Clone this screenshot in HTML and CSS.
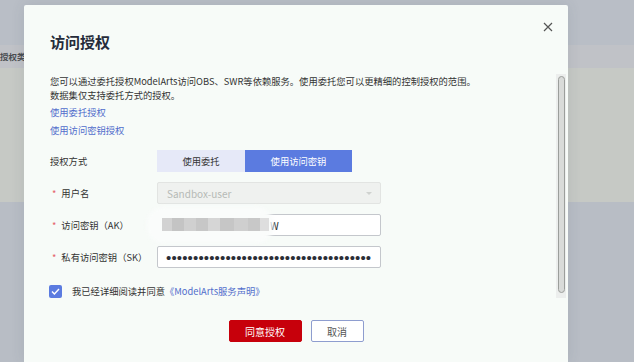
FILE: index.html
```html
<!DOCTYPE html>
<html lang="zh-CN">
<head>
    <meta charset="UTF-8">
    <meta name="viewport" content="width=device-width, initial-scale=1.0">
    <title>访问授权</title>
    <link rel="stylesheet" href="styles.css">
</head>
<body>
    <div class="page">
        <div class="page-top"></div>
        <div class="page-thead"><span>授权类型</span></div>
        <div class="page-tbody"></div>
        <div class="page-rest"></div>
    </div>

    <div class="dialog">
        <button class="close" aria-label="关闭">
            <svg width="10" height="10" viewBox="0 0 10 10"><path d="M1 1L9 9M9 1L1 9" stroke="#555" stroke-width="1.2" fill="none"/></svg>
        </button>
        <h2 class="title">访问授权</h2>

        <div class="dialog-body">
            <div class="content">
                <p class="desc">您可以通过委托授权ModelArts访问OBS、SWR等依赖服务。使用委托您可以更精细的控制授权的范围。<br>数据集仅支持委托方式的授权。</p>
                <div class="links">
                    <a href="#">使用委托授权</a>
                    <a href="#">使用访问密钥授权</a>
                </div>

                <div class="form">
                    <div class="row">
                        <div class="label">授权方式</div>
                        <div class="seg">
                            <span class="seg-item">使用委托</span>
                            <span class="seg-item active">使用访问密钥</span>
                        </div>
                    </div>
                    <div class="row">
                        <div class="label"><i class="req">*</i>用户名</div>
                        <div class="field disabled">
                            <span>Sandbox-user</span>
                            <span class="caret"></span>
                        </div>
                    </div>
                    <div class="row">
                        <div class="label"><i class="req">*</i>访问密钥（AK）</div>
                        <div class="field">
                            <span class="ak-tail">W</span>
                            <div class="mask"></div>
                            <div class="mask-blocks"></div>
                        </div>
                    </div>
                    <div class="row">
                        <div class="label"><i class="req">*</i>私有访问密钥（SK）</div>
                        <div class="field dots">••••••••••••••••••••••••••••••••••••••</div>
                    </div>
                </div>

                <label class="agree">
                    <span class="check">
                        <svg width="9" height="7" viewBox="0 0 9 7"><path d="M1 3.5L3.4 6L8 1" stroke="#fff" stroke-width="1.4" fill="none"/></svg>
                    </span>
                    我已经详细阅读并同意<a href="#">《ModelArts服务声明》</a>
                </label>
            </div>

            <div class="scrollbar"><div class="thumb"></div></div>
        </div>

        <div class="footer">
            <button class="btn btn-primary">同意授权</button>
            <button class="btn btn-ghost">取消</button>
        </div>
    </div>
</body>
</html>
```

FILE: styles.css
```css
html, body {
    margin: 0;
    height: 100%;
    overflow: hidden;
}
body {
    font-family: "Noto Sans CJK SC", "Noto Sans", sans-serif;
    font-size: 9.3px;
    color: #333;
    background: #b8bdc5;
}

/* page behind the modal */
.page {
    display: flex;
    flex-direction: column;
    height: 100%;
}
.page-top { height: 45px; background: #b9bec6; }
.page-thead {
    height: 23px;
    background: #c0c2c7;
    line-height: 23px;
    font-weight: bold;
    color: #4a4d52;
    font-size: 8.5px;
}
.page-tbody { height: 134px; background: #c6c9c5; }
.page-rest { flex: 1; background: #b8bdc5; }

/* modal */
.dialog {
    position: absolute;
    left: 24px;
    top: 5px;
    bottom: 0;
    width: 544px;
    background: #f7fbf8;
    border-radius: 2px 2px 0 0;
    box-shadow: 0 0 14px rgba(60, 70, 90, 0.12);
    padding-top: 27px;
    box-sizing: border-box;
}
.close {
    position: absolute;
    top: 17px;
    right: 15px;
    border: none;
    background: none;
    padding: 0;
    width: 10px;
    height: 10px;
    cursor: pointer;
}
.close svg { display: block; }
.title {
    margin: 0 0 0 26px;
    font-size: 15px;
    line-height: 20px;
    font-weight: bold;
    color: #252b3a;
}

.dialog-body {
    display: flex;
    margin-top: 22px;
    height: 224px;
    padding-left: 26px;
}
.content { flex: 1; }
.desc {
    margin: 0;
    line-height: 14px;
}
.links {
    display: flex;
    flex-direction: column;
    align-items: flex-start;
    margin-top: 1px;
}
.links a, .agree a {
    color: #526ecc;
    text-decoration: none;
    line-height: 18px;
}

.form {
    display: flex;
    flex-direction: column;
    gap: 10px;
    margin-top: 11px;
}
.row {
    display: flex;
    align-items: center;
    height: 22px;
}
.label {
    width: 107px;
    flex: none;
}
.req {
    font-style: normal;
    color: #e5646e;
    margin: 0 5px 0 2px;
}
.seg { display: flex; height: 22px; }
.seg-item {
    display: flex;
    align-items: center;
    justify-content: center;
    width: 88px;
    background: #e6e9f8;
    color: #333;
}
.seg-item.active {
    width: 107px;
    background: #5b7be0;
    color: #fff;
}
.field {
    position: relative;
    width: 224px;
    height: 22px;
    box-sizing: border-box;
    border: 1px solid #c4c7cc;
    border-radius: 2px;
    background: #fff;
    display: flex;
    align-items: center;
    padding-left: 9px;
    font-size: 10px;
}
.field.disabled {
    background: #eff1ef;
    border-color: #e2e4e2;
    color: #b6bab6;
    justify-content: space-between;
    padding-right: 8px;
}
.caret {
    width: 0;
    height: 0;
    border-left: 3px solid transparent;
    border-right: 3px solid transparent;
    border-top: 3px solid #cfd2cf;
}
.ak-tail {
    padding-left: 103px;
    color: #222;
}
/* blurred-out key */
.mask {
    position: absolute;
    left: -11px;
    top: -8px;
    width: 126px;
    height: 36px;
    background: #fafcfb;
    border-radius: 16px;
    filter: blur(2px);
}
.mask-blocks {
    position: absolute;
    left: 4px;
    top: 3px;
    width: 107px;
    height: 13px;
    filter: blur(0.6px);
    background: linear-gradient(to right,
        #d2d2d2 0 10px, #c4c4c4 10px 22px, #d0d0d0 22px 34px,
        #c7c7c7 34px 46px, #d6d6d6 46px 58px, #c6c6c6 58px 72px,
        #cfcfcf 72px 86px, #c8c8c8 86px 98px, #dedede 98px);
}
.dots {
    font-family: "Liberation Sans", sans-serif;
    font-size: 15px;
    color: #2a2e36;
    letter-spacing: 0.15px;
    padding-left: 8px;
}

.agree {
    display: flex;
    align-items: center;
    height: 14px;
    margin-top: 16px;
    margin-left: -1px;
}
.check {
    width: 13px;
    height: 13px;
    background: #5b7be0;
    border-radius: 2px;
    display: flex;
    align-items: center;
    justify-content: center;
    margin-right: 10px;
}
.agree a { line-height: 14px; }

.scrollbar {
    width: 10px;
    margin-right: 2px;
    background: #eceeed;
    box-sizing: border-box;
    padding: 2px 1px 5px 2px;
}
.thumb {
    height: 100%;
    box-sizing: border-box;
    background: #d9dbd9;
    border: 1px solid #9b9e9b;
    border-radius: 4px;
}

.footer {
    display: flex;
    justify-content: center;
    gap: 9px;
    margin-top: 22px;
}
.btn {
    height: 22px;
    border-radius: 2px;
    font-family: inherit;
    font-size: 10px;
    padding: 0;
    cursor: pointer;
}
.btn-primary {
    width: 73px;
    background: #c7000b;
    border: 1px solid #c7000b;
    color: #fff;
}
.btn-ghost {
    width: 53px;
    background: #fff;
    border: 1px solid #8e9dcf;
    color: #555;
}
```
